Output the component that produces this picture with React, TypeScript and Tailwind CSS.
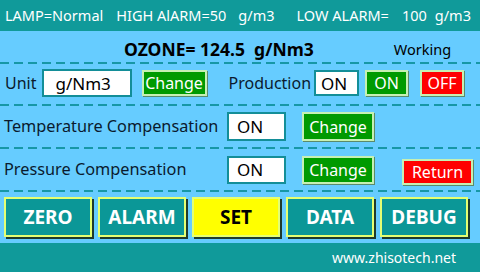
import React from "react";

const FONT = { fontFamily: '"Noto Sans", "Open Sans", sans-serif' };

/** Dashed teal separator between rows. */
function Dash() {
  return (
    <div className="h-[2px] w-full shrink-0 bg-[repeating-linear-gradient(90deg,#1797a6_0_9px,transparent_9px_14px)]" />
  );
}

function ValueBox({ text, className }: { text: string; className: string }) {
  return (
    <div
      className={`flex items-center border-2 border-[#138e98] bg-white text-[17px] leading-none text-black ${className}`}
    >
      {text}
    </div>
  );
}

function SmallButton({
  text,
  color,
  className,
}: {
  text: string;
  color: "green" | "red";
  className: string;
}) {
  const bg = color === "green" ? "bg-[#009a00]" : "bg-[#ff0000]";
  return (
    <div
      className={`flex items-center justify-center border-2 border-[#c6f0b4] text-[16px] leading-none text-white shadow-[1px_1px_0_#5a8a6a] ${bg} ${className}`}
    >
      {text}
    </div>
  );
}

function NavButton({ text, active }: { text: string; active?: boolean }) {
  return (
    <div
      className={`flex h-[40px] w-[88px] items-center justify-center border-2 border-[#e4ff73] text-[19px] font-bold leading-none shadow-[2px_2px_0_#1e3a2c] ${
        active ? "bg-[#ffff00] text-black" : "bg-[#0b9797] text-white"
      }`}
    >
      {text}
    </div>
  );
}

export default function App() {
  return (
    <div
      className="flex h-[272px] w-[480px] flex-col overflow-hidden bg-[#66ccff] text-[#0a1a2e]"
      style={FONT}
    >
      {/* status bar */}
      <div className="flex h-[31px] shrink-0 items-center whitespace-pre bg-[#109a9a] pl-[5px] text-[14.5px] text-white">
        <span>LAMP=Normal</span>
        <span className="ml-[13px]">HIGH AlARM=50</span>
        <span className="ml-[12px]">g/m3</span>
        <span className="ml-[22px]">LOW ALARM=</span>
        <span className="ml-[13px]">100</span>
        <span className="ml-[8px]">g/m3</span>
      </div>

      {/* reading */}
      <div className="flex h-[31px] shrink-0 items-center pt-[6px]">
        <span className="ml-[124px] whitespace-pre text-[17.5px] font-bold text-black">
          OZONE= 124.5  g/Nm3
        </span>
        <span className="ml-[80px] text-[14.5px] text-black">Working</span>
      </div>
      <Dash />

      {/* unit / production */}
      <div className="flex h-[40px] shrink-0 items-center pb-[2px]">
        <span className="ml-[5px] text-[16px]">Unit</span>
        <ValueBox text="g/Nm3" className="ml-[5px] h-[28px] w-[90px] pl-[12px]" />
        <SmallButton text="Change" color="green" className="ml-[10px] h-[26px] w-[65px]" />
        <span className="ml-[22px] text-[16px]">Production</span>
        <ValueBox text="ON" className="ml-[3px] h-[26px] w-[45px] pl-[5px]" />
        <SmallButton text="ON" color="green" className="ml-[6px] h-[26px] w-[43px]" />
        <SmallButton text="OFF" color="red" className="ml-[12px] h-[26px] w-[44px]" />
      </div>
      <Dash />

      {/* temperature */}
      <div className="flex h-[41px] shrink-0 items-center">
        <span className="ml-[4px] w-[223px] text-[16.3px]">Temperature Compensation</span>
        <ValueBox text="ON" className="h-[29px] w-[59px] pl-[8px]" />
        <SmallButton text="Change" color="green" className="ml-[16px] h-[29px] w-[72px]" />
      </div>
      <Dash />

      {/* pressure */}
      <div className="flex h-[41px] shrink-0 items-center">
        <span className="ml-[4px] w-[223px] text-[16.3px]">Pressure Compensation</span>
        <ValueBox text="ON" className="h-[28px] w-[59px] pl-[8px]" />
        <SmallButton text="Change" color="green" className="ml-[16px] h-[28px] w-[72px]" />
        <SmallButton text="Return" color="red" className="ml-[28px] mt-[4px] h-[26px] w-[71px]" />
      </div>
      <Dash />

      {/* navigation */}
      <div className="flex h-[51px] shrink-0 items-start gap-[6px] pl-[4px] pt-[5px]">
        <NavButton text="ZERO" />
        <NavButton text="ALARM" />
        <NavButton text="SET" active />
        <NavButton text="DATA" />
        <NavButton text="DEBUG" />
      </div>

      {/* footer */}
      <div className="flex flex-1 items-center justify-end bg-[#109a9a] pr-[24px] text-[14px] text-white">
        www.zhisotech.net
      </div>
    </div>
  );
}
